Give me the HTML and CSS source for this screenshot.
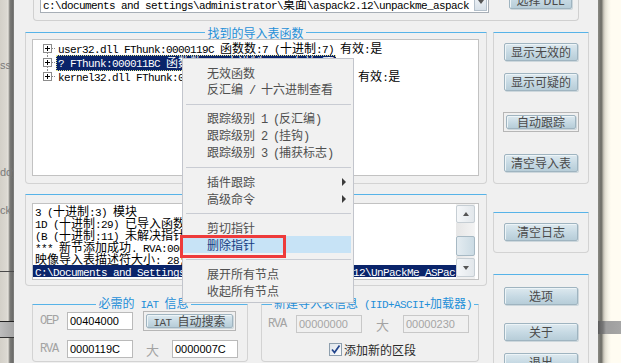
FILE: index.html
```html
<!DOCTYPE html>
<html>
<head>
<meta charset="utf-8">
<link rel="stylesheet" href="styles.css">
</head>
<body>
<div class="screen">
  <div class="strip-l">
    <div class="frag f1">ss</div>
    <div class="frag f2">ddy</div>
    <div class="frag f3">ck</div>
    <div class="hline"></div>
    <div class="gblock"></div>
  </div>

  <div class="dialog">
    <div class="top-group">
      <div class="combo">
        <div class="combo-text m">c:\documents and settings\administrator\<span class="c">桌面</span>\aspack2.12\unpackme_aspack</div>
        <div class="combo-btn"><span class="tri-down"></span></div>
      </div>
      <div class="btn pick">选择 DLL</div>
    </div>

    <div class="main">
      <div class="lcol">
        <fieldset class="grp imports">
          <legend>找到的导入表函数</legend>
          <div class="tree m">
            <div class="node">
              <svg class="exp" width="13" height="14" viewBox="0 0 13 14"><path d="M4.5 11v3" stroke="#8a8a8a" stroke-dasharray="1 1"/><path d="M9 6.5h4" stroke="#8a8a8a" stroke-dasharray="1 1"/><rect x="0.5" y="2.5" width="8" height="8" fill="#fff" stroke="#8c8c8c"/><path d="M2 6.5h5M4.5 4v5" stroke="#000"/></svg>
              <span class="lbl">user32.dll FThunk:0000119C <span class="c">函数数</span>:7 (<span class="c">十进制</span>:7) <span class="c">有效</span>:<span class="c">是</span></span>
            </div>
            <div class="node">
              <svg class="exp" width="13" height="14" viewBox="0 0 13 14"><path d="M4.5 0v2M4.5 11v3" stroke="#8a8a8a" stroke-dasharray="1 1"/><path d="M9 6.5h4" stroke="#8a8a8a" stroke-dasharray="1 1"/><rect x="0.5" y="2.5" width="8" height="8" fill="#fff" stroke="#8c8c8c"/><path d="M2 6.5h5M4.5 4v5" stroke="#000"/></svg>
              <span class="lbl sel">? FThunk:000011BC <span class="c">函数数</span>:B (<span class="c">十进制</span>:11) <span class="c">有效</span>:<span class="c">否</span></span>
            </div>
            <div class="node">
              <svg class="exp" width="13" height="14" viewBox="0 0 13 14"><path d="M4.5 0v2" stroke="#8a8a8a" stroke-dasharray="1 1"/><path d="M9 6.5h4" stroke="#8a8a8a" stroke-dasharray="1 1"/><rect x="0.5" y="2.5" width="8" height="8" fill="#fff" stroke="#8c8c8c"/><path d="M2 6.5h5M4.5 4v5" stroke="#000"/></svg>
              <span class="lbl">kernel32.dll FThunk:00001000 <span class="c">函数数</span>:B (<span class="c">十进制</span>:11) <span class="c">有效</span>:<span class="c">是</span></span>
            </div>
          </div>
        </fieldset>

        <fieldset class="grp log">
          <legend>日志</legend>
          <div class="logbox">
            <div class="loglines m">
              <div class="ln">3 (<span class="c">十进制</span>:3) <span class="c">模块</span></div>
              <div class="ln">1D (<span class="c">十进制</span>:29) <span class="c">已导入函数。</span></div>
              <div class="ln">(B (<span class="c">十进制</span>:11) <span class="c">未解决指针</span>)</div>
              <div class="ln">*** <span class="c">新节添加成功</span>. RVA:00005000 <span class="c">大小</span>:00000230</div>
              <div class="ln"><span class="c">映像导入表描述符大小</span>: 28; <span class="c">总计</span> IAT <span class="c">大小</span>: 7C</div>
              <div class="ln sel">C:\Documents and Settings\Administrator\<span class="c">桌面</span>\aspack2.12\UnPackMe_ASPack_.exe</div>
            </div>
            <div class="vscroll">
              <div class="sbtn up"><span class="tri-up"></span></div>
              <div class="track t1"></div>
              <div class="thumb"></div>
              <div class="track t2"></div>
              <div class="sbtn down"><span class="tri-down"></span></div>
            </div>
          </div>
        </fieldset>

        <div class="bottom-row">
          <fieldset class="grp iat">
            <legend>必需的<span class="m"> IAT </span>信息</legend>
            <div class="row r1">
              <span class="lab">OEP</span>
              <span class="inp">00404000</span>
              <div class="frame wide"><div class="btn fbtn"><span class="m">IAT </span>自动搜索</div></div>
            </div>
            <div class="row r2">
              <span class="lab">RVA</span>
              <span class="inp">0000119C</span>
              <span class="lab2">大</span>
              <span class="inp">0000007C</span>
            </div>
          </fieldset>

          <fieldset class="grp newsec">
            <legend>新建导入表信息<span class="m"> (IID+ASCII+</span>加载器<span class="m">)</span></legend>
            <div class="row r3">
              <span class="lab">RVA</span>
              <span class="inp dis">00000000</span>
              <span class="lab2 w41">大</span>
              <span class="inp dis">00000230</span>
            </div>
            <div class="row r4">
              <span class="chk"><svg width="11" height="11" viewBox="0 0 11 11"><path d="M2 5.5L4.5 8.5L9.5 1.5" fill="none" stroke="#23458c" stroke-width="1.7"/></svg></span>
              <span class="chk-lbl">添加新的区段</span>
            </div>
          </fieldset>
        </div>
      </div>

      <div class="rcol">
        <div class="rgrp ga">
          <div class="btn rbtn">显示无效的</div>
          <div class="btn rbtn b2">显示可疑的</div>
          <div class="frame rframe"><div class="btn fbtn">自动跟踪</div></div>
          <div class="btn rbtn b4">清空导入表</div>
        </div>
        <div class="rgrp gb">
          <div class="btn rbtn">清空日志</div>
        </div>
        <div class="rgrp gc">
          <div class="btn rbtn">选项</div>
          <div class="btn rbtn c2">关于</div>
          <div class="btn rbtn c3">退出</div>
        </div>
      </div>
    </div>
  </div>

  <div class="strip-r"><div class="rband"></div></div>
</div>

<div class="menu">
  <div class="mi"><span>无效函数</span></div>
  <div class="mi"><span>反汇编<span class="m"> / </span>十六进制查看</span></div>
  <div class="sep"></div>
  <div class="mi"><span>跟踪级别<span class="m"> 1 (</span>反汇编<span class="m">)</span></span></div>
  <div class="mi"><span>跟踪级别<span class="m"> 2 (</span>挂钩<span class="m">)</span></span></div>
  <div class="mi"><span>跟踪级别<span class="m"> 3 (</span>捕获标志<span class="m">)</span></span></div>
  <div class="sep"></div>
  <div class="mi"><span>插件跟踪</span><span class="sub"></span></div>
  <div class="mi"><span>高级命令</span><span class="sub"></span></div>
  <div class="sep"></div>
  <div class="mi"><span>剪切指针</span></div>
  <div class="mi hl"><span>删除指针</span></div>
  <div class="sep"></div>
  <div class="mi"><span>展开所有节点</span></div>
  <div class="mi"><span>收起所有节点</span></div>
</div>
<div class="mark"></div>
</body>
</html>
```

FILE: styles.css
```css
html, body {
  margin: 0;
  padding: 0;
  overflow: hidden;
}
body {
  width: 621px;
  height: 363px;
  background: #f0f0f0;
  font-family: "Noto Sans CJK SC", sans-serif;
  font-size: 12px;
  color: #000;
  position: relative;
}
.screen {
  display: flex;
  height: 363px;
  overflow: hidden;
}

/* mono text: ASCII 6px wide, CJK 12px */
.m {
  font-family: "Liberation Mono", monospace;
  font-size: 11px;
  letter-spacing: -0.6px;
}
.c {
  font-family: "Noto Sans CJK SC", sans-serif;
  font-size: 12px;
  letter-spacing: 0;
}

/* left desktop strip */
.strip-l {
  width: 14px;
  flex: none;
  display: flex;
  flex-direction: column;
  background: linear-gradient(to right, #d3d0c8 0, #dcd9d2 7px, #e6e4de 8px, #a8a6a0 9px, #7b7b78 10px, #6a6a68 13px, #8c8c8a 14px);
}
.frag {
  height: 12px;
  line-height: 12px;
  font-family: "Liberation Sans", sans-serif;
  font-size: 11px;
  color: #7a7a7a;
  white-space: nowrap;
  overflow: hidden;
}
.f1 { margin-top: 59px; }
.f2 { margin-top: 95px; }
.f3 { margin-top: 26px; }
.hline {
  margin-top: 55px;
  height: 1px;
  background: #4a4a4a;
}
.gblock {
  margin-top: 49px;
  height: 15px;
  border-top: 1px solid #222;
  border-bottom: 1px solid #333;
  background: linear-gradient(to right, #bdbdbd, #a5a5a5);
}

/* right desktop strip */
.strip-r {
  width: 23px;
  flex: none;
  background: linear-gradient(to right, #8a8a84 0, #6e6e68 3px, #7a7a72 4px, #b5b2a8 5px, #e0ddd1 7px, #f5f2e6 10px, #fffcf2 13px);
}
.rband {
  margin-top: 321px;
  height: 13px;
  background: linear-gradient(to right, #5c5c5c 0, #767676 5px, #9e9e9e 8px, #a6a6a6 100%);
}

/* dialog */
.dialog {
  width: 584px;
  flex: none;
  box-sizing: border-box;
  padding: 0 10px 0 11px;
}
.top-group {
  box-sizing: border-box;
  height: 41px;
  margin: -20px 9px 0 8px;
  border: 1px solid #d0d0d0;
  border-top: none;
  border-radius: 0 0 4px 4px;
  display: flex;
  align-items: flex-end;
  padding: 0 0 7px 6px;
}
.combo {
  box-sizing: border-box;
  width: 449px;
  height: 20px;
  border: 1px solid #a7aeb6;
  background: #fff;
  display: flex;
}
.combo-text {
  flex: 1;
  padding: 4px 0 0 2px;
  line-height: 12px;
  white-space: nowrap;
  overflow: hidden;
}
.combo-btn {
  box-sizing: border-box;
  width: 13px;
  margin: 0 1px 1px 0;
  border: 1px solid #b4c0cb;
  border-top: none;
  background: linear-gradient(#f3f6f9, #d8e1e9);
  display: flex;
  align-items: center;
  justify-content: center;
}
.tri-down {
  width: 0;
  height: 0;
  border-top: 4px solid #555;
  border-left: 3.5px solid transparent;
  border-right: 3.5px solid transparent;
}
.tri-up {
  width: 0;
  height: 0;
  border-bottom: 4px solid #555;
  border-left: 3.5px solid transparent;
  border-right: 3.5px solid transparent;
}

/* buttons */
.btn {
  box-sizing: border-box;
  border: 1px solid #9fb4c0;
  border-radius: 2px;
  background: linear-gradient(#dde9ef, #c6d9e3 55%, #b7cdd8);
  box-shadow: inset 1px 1px 0 #edf4f7, 1px 1px 0 #cdd7dc;
  color: #4a4a4a;
  text-align: center;
  font-size: 12px;
  line-height: 16px;
  white-space: nowrap;
}
.pick {
  width: 63px;
  height: 19px;
  margin: 0 0 4px 20px;
  line-height: 17px;
}
.frame {
  box-sizing: border-box;
  height: 20px;
  border: 1px solid #b6b6b6;
  padding: 2px;
}
.fbtn {
  height: 14px;
  line-height: 12px;
}

/* main area */
.main {
  display: flex;
  gap: 6px;
  margin-top: 5px;
}
.lcol {
  width: 462px;
  flex: none;
}
.grp {
  margin: 0;
  min-width: 0;
  padding: 0 7px 7px 6px;
  border: 1px solid #d3d3d3;
  border-top: 1px solid #56b3e8;
  border-radius: 0 0 4px 4px;
  box-sizing: border-box;
}
.grp legend {
  margin: 0 auto;
  padding: 0 2px;
  line-height: 13px;
  font-size: 12px;
  color: #1f8fd8;
  white-space: nowrap;
}

.tree {
  box-sizing: border-box;
  height: 137px;
  border: 1px solid #c2c2c2;
  background: #fff;
  padding: 2px 0 0 10px;
  line-height: 14px;
  white-space: nowrap;
  overflow: hidden;
}
.node {
  display: flex;
  align-items: center;
  height: 14px;
}
.exp {
  flex: none;
  display: block;
}
.lbl {
  padding: 0 2px;
}
.lbl.sel {
  background: #0a246a;
  color: #fff;
  outline: 1px dotted #e8e890;
  outline-offset: -1px;
}

.log {
  margin-top: 4px;
  padding-top: 2px;
  padding-bottom: 5px;
}
.logbox {
  box-sizing: border-box;
  height: 77px;
  border: 1px solid #c2c2c2;
  background: #fff;
  display: flex;
  padding-right: 3px;
}
.loglines {
  flex: 1;
  min-width: 0;
  padding-top: 1px;
  line-height: 12px;
  white-space: nowrap;
  overflow: hidden;
}
.ln {
  padding-left: 2px;
  height: 12px;
}
.ln.sel {
  background: #0a246a;
  color: #fff;
}
.vscroll {
  width: 19px;
  flex: none;
  display: flex;
  flex-direction: column;
  background: #f0f0f0;
}
.sbtn {
  box-sizing: border-box;
  border: 1px solid #c6ced4;
  border-radius: 2px;
  background: linear-gradient(to right, #f5f7f9, #e2e7eb);
  display: flex;
  align-items: center;
  justify-content: center;
}
.sbtn.up {
  height: 18px;
  margin-top: 1px;
}
.sbtn.down {
  height: 19px;
}
.track {
  background: linear-gradient(to right, #e6e6e6, #f4f4f4);
}
.t1 { height: 13px; }
.t2 { height: 2px; }
.thumb {
  box-sizing: border-box;
  height: 20px;
  border: 1px solid #a7b9c4;
  border-radius: 2px;
  background: linear-gradient(to right, #e4ecf1, #cbdbe4);
}

/* bottom groups */
.bottom-row {
  display: flex;
  gap: 13px;
  padding-left: 7px;
  margin-top: 10px;
}
.iat {
  width: 216px;
  padding: 0 0 2px 7px;
}
.newsec {
  width: 218px;
  padding: 0 0 4px 6px;
}
.row {
  display: flex;
  align-items: center;
}
.r1 {
  height: 20px;
  margin-top: -1px;
}
.r2 {
  height: 20px;
  margin-top: 8px;
}
.r3 {
  height: 18px;
  margin-top: 3px;
}
.r4 {
  height: 13px;
  margin-top: 10px;
  padding-left: 61px;
}
.lab {
  width: 27px;
  flex: none;
  color: #a3a3a3;
  font-family: "Liberation Mono", monospace;
  font-size: 12px;
  letter-spacing: -1.2px;
  line-height: 12px;
}
.newsec .lab {
  width: 28px;
}
.lab2 {
  width: 39px;
  flex: none;
  text-align: center;
  color: #a3a3a3;
  font-size: 13px;
  line-height: 13px;
}
.lab2.w41 {
  width: 41px;
}
.inp {
  box-sizing: border-box;
  width: 66px;
  height: 18px;
  flex: none;
  border: 1px solid #bababa;
  background: #fff;
  font-family: "Liberation Sans", sans-serif;
  font-size: 11px;
  line-height: 16px;
  padding-left: 2px;
  color: #000;
}
.inp.dis {
  background: #f0f0f0;
  border-color: #c8c8c8;
  color: #a5a5a5;
}
.wide {
  width: 93px;
  margin-left: 10px;
  flex: none;
}
.chk {
  box-sizing: border-box;
  width: 13px;
  height: 13px;
  flex: none;
  border: 1px solid #8e9fae;
  background: linear-gradient(135deg, #dfe5eb, #fbfcfd);
  display: flex;
  align-items: center;
  justify-content: center;
}
.chk svg {
  display: block;
}
.chk-lbl {
  margin-left: 2px;
  color: #2a2a2a;
  line-height: 13px;
}

/* right column */
.rcol {
  width: 96px;
  flex: none;
}
.rgrp {
  box-sizing: border-box;
  border: 1px solid #d3d3d3;
  border-top: 1px solid #56b3e8;
  border-radius: 0 0 4px 4px;
}
.ga {
  margin-top: 6px;
  height: 152px;
  padding-top: 10px;
}
.gb {
  margin-top: 28px;
  height: 41px;
  padding-top: 10px;
}
.gc {
  margin-top: 21px;
  height: 110px;
  padding-top: 12px;
}
.rbtn {
  width: 74px;
  height: 18px;
  margin-left: 10px;
}
.b2 { margin-top: 12px; }
.b4 { margin-top: 22px; }
.c2 { margin-top: 18px; }
.c3 { margin-top: 12px; }
.rframe {
  width: 76px;
  margin: 21px 0 0 9px;
}

/* context menu */
.menu {
  position: absolute;
  left: 182px;
  top: 58px;
  width: 172px;
  height: 245px;
  box-sizing: border-box;
  border: 1px solid #c2c5cc;
  background: #f1f1f1;
  padding: 5px 2px 0 0;
}
.mi {
  height: 17px;
  line-height: 17px;
  padding: 0 5px 0 24px;
  color: #4f4f4f;
  font-size: 12px;
  display: flex;
  justify-content: space-between;
  align-items: center;
  white-space: nowrap;
}
.mi .m {
  font-size: 12px;
  letter-spacing: -1.2px;
}
.mi.hl {
  background: #c7e3f6;
  color: #173d82;
}
.sep {
  height: 1px;
  margin: 6px 0 5px 3px;
  background: #c9ccd3;
}
.sub {
  width: 0;
  height: 0;
  border-left: 4px solid #3c3c3c;
  border-top: 4px solid transparent;
  border-bottom: 4px solid transparent;
}
.mark {
  position: absolute;
  left: 180px;
  top: 235px;
  width: 106px;
  height: 23px;
  box-sizing: border-box;
  border: 3px solid #ee3b3b;
}
```
